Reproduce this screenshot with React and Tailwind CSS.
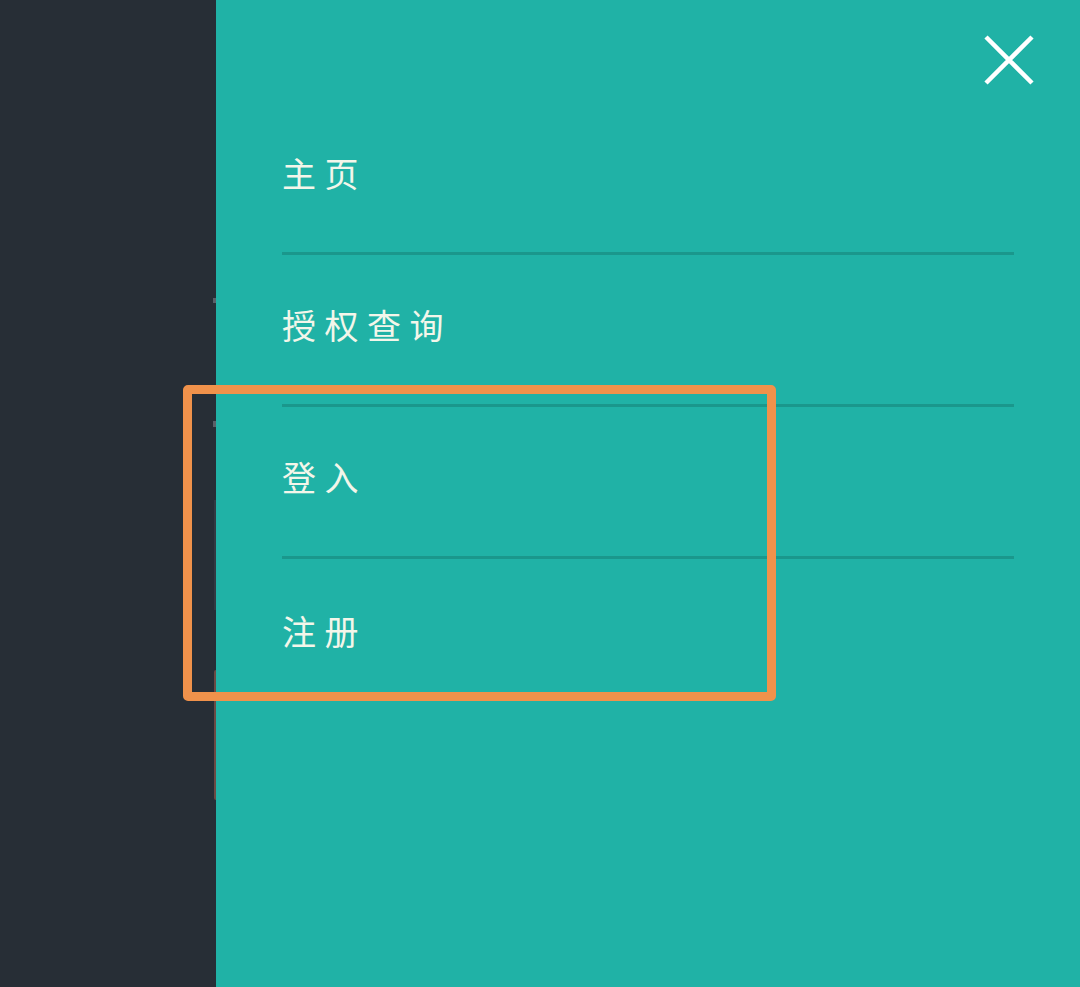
import React from 'react';

const items = ['主页', '授权查询', '登入', '注册'];

const CloseIcon = () => (
  <svg width="52" height="52" viewBox="0 0 52 52" fill="none" stroke="currentColor" strokeWidth="4.5">
    <path d="M3 3 L49 49 M49 3 L3 49" />
  </svg>
);

const App = () => {
  return (
    <div className="relative flex h-[987px] w-[1080px] overflow-hidden bg-[#272e36]">
      <div className="relative w-[216px] shrink-0">
        {/* bits of the page under the drawer */}
        <div className="absolute right-0 top-[298px] h-[5px] w-[3px] bg-[#5b6068]" />
        <div className="absolute right-0 top-[421px] h-[6px] w-[3px] bg-[#5b6068]" />
        <div className="absolute right-0 top-[500px] h-[110px] w-[2px] bg-[#323a42]" />
        <div className="absolute right-0 top-[670px] h-[130px] w-[2px] rounded-l bg-[#6b4a44]" />
      </div>

      <div className="relative flex-1 bg-[#20b2a6] px-[66px] pt-[103px]" style={{ fontFamily: '"Noto Sans CJK SC", "Noto Sans", sans-serif' }}>
        <button className="absolute right-[45px] top-[34px] text-white">
          <CloseIcon />
        </button>

        <nav className="flex flex-col">
          {items.map((label, idx) => (
            <a
              key={label}
              className={`flex h-[152px] items-center pb-[9px] text-[34px] leading-none tracking-[8.5px] text-[#f3f6ea] ${
                idx < items.length - 1 ? 'border-b-[3px] border-[#1a978c]' : ''
              }`}
            >
              {label}
            </a>
          ))}
        </nav>
      </div>

      {/* highlight annotation */}
      <div className="pointer-events-none absolute left-[183px] top-[385px] h-[316px] w-[593px] rounded-[5px] border-[9px] border-[#f0924b]" />
    </div>
  );
};

export default App;
